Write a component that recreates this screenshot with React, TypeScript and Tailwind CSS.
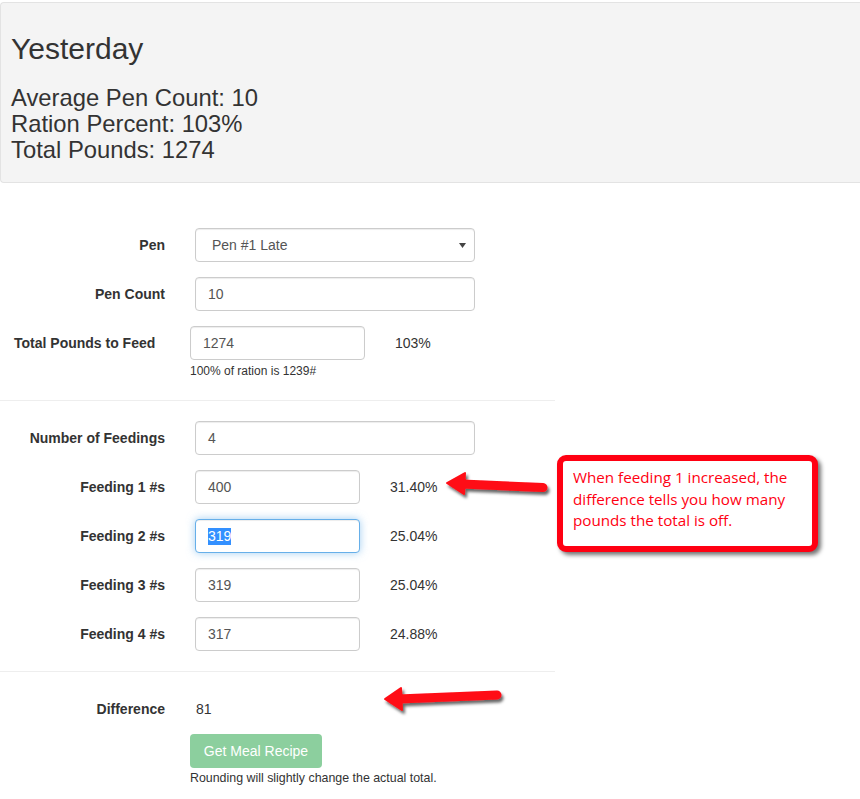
import React from "react";

function Field({ value, w, focused }: { value: string; w: string; focused?: boolean }) {
  return (
    <div
      className={
        "h-[34px] rounded-[4px] border px-[12px] flex items-center text-[14px] text-[#555] bg-white " +
        w +
        (focused
          ? " border-[#66afe9] shadow-[inset_0_1px_1px_rgba(0,0,0,0.075),0_0_8px_rgba(102,175,233,0.6)]"
          : " border-[#ccc] shadow-[inset_0_1px_1px_rgba(0,0,0,0.075)]")
      }
    >
      {focused ? <span className="bg-[#3390ff] text-white leading-[17px]">{value}</span> : value}
    </div>
  );
}

function Row({ label, children, last }: { label: string; children: React.ReactNode; last?: boolean }) {
  return (
    <div className={"flex items-center h-[34px]" + (last ? "" : " mb-[15px]")}>
      <div className="w-[165px] text-right font-bold text-[14px] text-[#333]">{label}</div>
      <div className="ml-[30px] flex items-center">{children}</div>
    </div>
  );
}

export default function App() {
  return (
    <div
      className="relative w-[860px] h-[799px] overflow-hidden bg-white text-[#333] text-[14px]"
      style={{ fontFamily: '"Liberation Sans", Arial, sans-serif' }}
    >
      {/* Jumbotron */}
      <div className="mt-[2px] h-[181px] bg-[#f4f4f4] border-t border-b border-l border-[#e3e3e3] rounded-l-[4px] pl-[10px] pt-[29px]">
        <h2 className="text-[30px] leading-[33px] font-normal text-[#333]">Yesterday</h2>
        <p className="mt-[20px] text-[23.8px] leading-[26px]">
          Average Pen Count: 10
          <br />
          Ration Percent: 103%
          <br />
          Total Pounds: 1274
        </p>
      </div>

      {/* Form */}
      <div className="pt-[45px]">
        <Row label="Pen">
          <div className="h-[34px] w-[280px] rounded-[4px] border border-[#ccc] bg-white pl-[16px] pr-[8px] flex items-center justify-between text-[14px] text-[#555] shadow-[inset_0_1px_1px_rgba(0,0,0,0.075)]">
            <span>Pen #1 Late</span>
            <svg width="7" height="5" viewBox="0 0 7 5">
              <path d="M0 0 L7 0 L3.5 5 Z" fill="#444" />
            </svg>
          </div>
        </Row>
        <Row label="Pen Count">
          <Field value="10" w="w-[280px]" />
        </Row>
        <div className="flex items-center h-[34px]">
          <div className="pl-[14px] w-[190px] font-bold text-[14px]">Total Pounds to Feed</div>
          <Field value="1274" w="w-[175px]" />
          <div className="ml-[30px] text-[14px]">103%</div>
        </div>
        <div className="ml-[190px] mt-[3px] text-[12px] leading-[17px]">100% of ration is 1239#</div>

        <hr className="mt-[20px] w-[555px] border-0 border-t border-[#eee]" />

        <div className="pt-[20px]">
          <Row label="Number of Feedings">
            <Field value="4" w="w-[280px]" />
          </Row>
          <Row label="Feeding 1 #s">
            <Field value="400" w="w-[165px]" />
            <span className="ml-[30px]">31.40%</span>
          </Row>
          <Row label="Feeding 2 #s">
            <Field value="319" w="w-[165px]" focused />
            <span className="ml-[30px]">25.04%</span>
          </Row>
          <Row label="Feeding 3 #s">
            <Field value="319" w="w-[165px]" />
            <span className="ml-[30px]">25.04%</span>
          </Row>
          <Row label="Feeding 4 #s" last>
            <Field value="317" w="w-[165px]" />
            <span className="ml-[30px]">24.88%</span>
          </Row>
        </div>

        <hr className="mt-[20px] w-[555px] border-0 border-t border-[#eee]" />

        <div className="mt-[27px] flex items-center h-[20px]">
          <div className="w-[165px] text-right font-bold">Difference</div>
          <div className="ml-[31px]">81</div>
        </div>
        <div className="ml-[190px] mt-[15px]">
          <button className="h-[34px] w-[132px] rounded-[4px] bg-[#8ccf9e] text-white text-[14px]">
            Get Meal Recipe
          </button>
          <div className="mt-[2px] text-[12.4px] leading-[17px]">Rounding will slightly change the actual total.</div>
        </div>
      </div>

      {/* Annotation box */}
      <div
        className="absolute left-[557px] top-[455px] w-[261px] h-[97px] border-[6px] border-[#ff0012] rounded-[9px] bg-white shadow-[3px_3px_4px_rgba(0,0,0,0.55)] pl-[10px] pt-[6px] text-[#ff0012] text-[15.2px] leading-[21.5px]"
        style={{ fontFamily: '"Open Sans", "Noto Sans", sans-serif' }}
      >
        When feeding 1 increased, the difference tells you how many pounds the total is off.
      </div>

      {/* Arrows */}
      <svg className="absolute left-0 top-0 pointer-events-none" width="860" height="799">
        <defs>
          <filter id="sh" x="-20%" y="-50%" width="140%" height="200%">
            <feDropShadow dx="2" dy="3" stdDeviation="1.5" floodColor="#000" floodOpacity="0.6" />
          </filter>
        </defs>
        <g filter="url(#sh)" fill="#ff0a14" stroke="#ff0a14" strokeLinejoin="round">
          <line x1="462" y1="484" x2="543" y2="487.5" strokeWidth="9" strokeLinecap="round" />
          <path d="M447 483 L465 473 L464 494 Z" strokeWidth="2" />
          <line x1="398" y1="699" x2="497" y2="695" strokeWidth="9" strokeLinecap="round" />
          <path d="M385 699 L401 688 L402 710 Z" strokeWidth="2" />
        </g>
      </svg>
    </div>
  );
}
